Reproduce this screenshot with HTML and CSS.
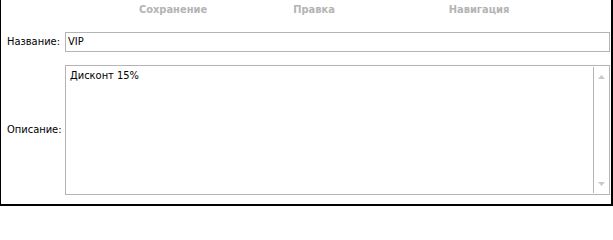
FILE: index.html
```html
<!DOCTYPE html>
<html lang="ru">
<head>
<meta charset="utf-8">
<title>Форма</title>
<link rel="stylesheet" href="styles.css">
</head>
<body>
<div class="window">
  <div class="toolbar">
    <span class="group">Сохранение</span>
    <span class="group">Правка</span>
    <span class="group">Навигация</span>
  </div>
  <div class="form">
    <label class="label">Название:</label>
    <div class="input">VIP</div>
    <label class="label">Описание:</label>
    <div class="memo">
      <div class="memo-text">Дисконт 15%</div>
      <div class="scrollbar">
        <svg class="arrow" width="7" height="4" viewBox="0 0 7 4"><polygon points="0,4 7,4 3.5,0" fill="#c8c8c8"/></svg>
        <svg class="arrow" width="7" height="4" viewBox="0 0 7 4"><polygon points="0,0 7,0 3.5,4" fill="#c8c8c8"/></svg>
      </div>
    </div>
  </div>
</div>
</body>
</html>
```

FILE: styles.css
```css
html, body {
  margin: 0;
  padding: 0;
  background: #ffffff;
}

.window {
  box-sizing: border-box;
  width: 613px;
  height: 206px;
  border-left: 1px solid #000;
  border-right: 2px solid #000;
  border-bottom: 2px solid #000;
  background: #fff;
  font-family: "DejaVu Sans Condensed", "Liberation Sans", Arial, sans-serif;
  font-size: 11px;
  color: #000;
}

.toolbar {
  height: 32px;
  display: grid;
  grid-template-columns: 122px 100px 100px 100px;
  column-gap: 0;
  padding-top: 3px;
  box-sizing: border-box;
}

.group {
  text-align: center;
  font-weight: bold;
  color: #b4b4b4;
  line-height: 14px;
}

.group:nth-child(1) { grid-column: 2; }
.group:nth-child(2) { grid-column: 3; margin-left: 41px; margin-right: -41px; }
.group:nth-child(3) { grid-column: 4; margin-left: 106px; margin-right: -106px; }

.form {
  display: grid;
  grid-template-columns: 58px 1fr;
  grid-template-rows: 20px 130px;
  row-gap: 13px;
  padding: 0 1px 0 6px;
}

.label {
  align-self: center;
  line-height: 14px;
}

.input {
  box-sizing: border-box;
  border: 1px solid #b4b4b4;
  height: 20px;
  line-height: 18px;
  padding: 0 2px;
}

.memo {
  box-sizing: border-box;
  border: 1px solid #b4b4b4;
  display: flex;
}

.memo-text {
  flex: 1;
  padding: 3px 4px;
  line-height: 14px;
  white-space: pre;
}

.scrollbar {
  width: 15px;
  margin: 1px 0;
  border-left: 1px solid #b4b4b4;
  display: flex;
  flex-direction: column;
  justify-content: space-between;
  align-items: center;
  padding: 8px 0 7px;
}

.arrow {
  display: block;
}
```
